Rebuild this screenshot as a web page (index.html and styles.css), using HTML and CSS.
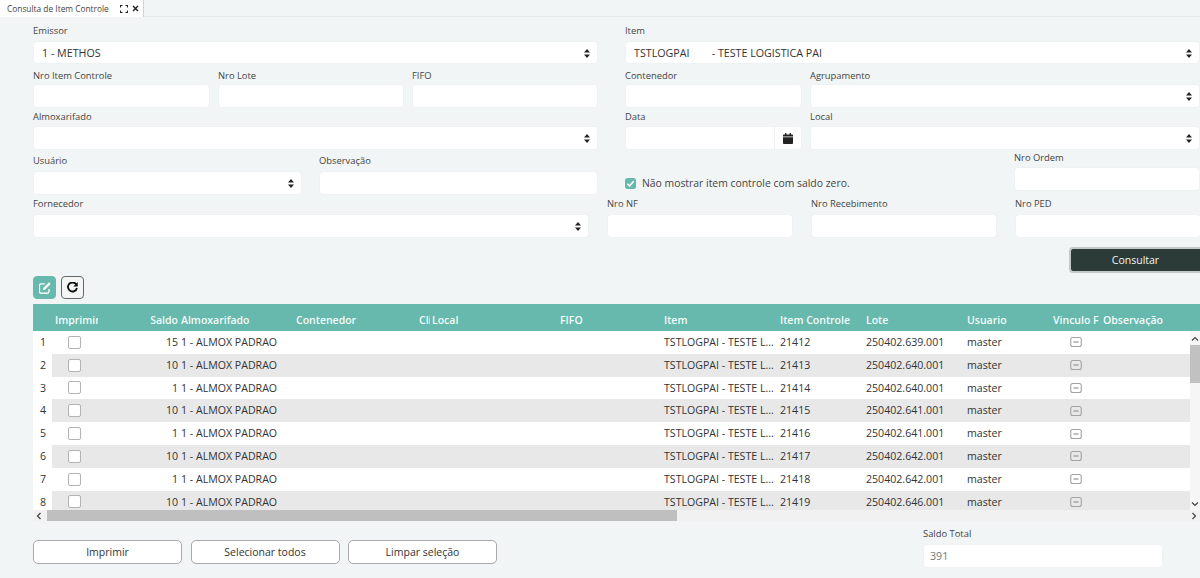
FILE: index.html
```html
<!DOCTYPE html>
<html lang="pt-BR">
<head>
<meta charset="utf-8">
<title>Consulta de Item Controle</title>
<link rel="stylesheet" href="styles.css">
</head>
<body>
<svg class="defs" width="0" height="0" aria-hidden="true">
  <symbol id="updown" viewBox="0 0 6 9"><path d="M3 0 6 3.6H0zM3 9 0 5.4H6z" fill="#222"/></symbol>
  <symbol id="minus" viewBox="0 0 12 12"><rect x=".75" y="1.5" width="10.5" height="9" rx="2" fill="none" stroke="#a3a3a3" stroke-width="1.1"/><path d="M3.5 6h5" stroke="#8a8a8a" stroke-width="1.1"/></symbol>
</svg>
<header class="tabbar">
  <div class="tab">
    <span class="tab-title">Consulta de Item Controle</span>
    <svg class="tab-icon" viewBox="0 0 10 10"><path d="M.7 3.2V.7h2.5M6.8.7h2.5v2.5M9.3 6.8v2.5H6.8M3.2 9.3H.7V6.8" fill="none" stroke="#222" stroke-width="1.3"/></svg>
    <svg class="tab-icon close" viewBox="0 0 10 10"><path d="M1.5 1.5l7 7M8.5 1.5l-7 7" fill="none" stroke="#222" stroke-width="2"/></svg>
  </div>
</header>
<main class="page">
  <section class="form">
    <div class="row r1">
      <div class="field w-565"><label>Emissor</label><div class="input select"><span>1 - METHOS</span><svg class="arrow"><use href="#updown"/></svg></div></div>
      <div class="field w-575 ml-27"><label>Item</label><div class="input select"><span class="pre">TSTLOGPAI        - TESTE LOGISTICA PAI</span><svg class="arrow"><use href="#updown"/></svg></div></div>
    </div>
    <div class="row r2">
      <div class="field w-177"><label>Nro Item Controle</label><div class="input"></div></div>
      <div class="field w-186 ml-8"><label>Nro Lote</label><div class="input"></div></div>
      <div class="field w-186 ml-8"><label>FIFO</label><div class="input"></div></div>
      <div class="field w-177 ml-27"><label>Contenedor</label><div class="input"></div></div>
      <div class="field w-390 ml-8"><label>Agrupamento</label><div class="input select"><svg class="arrow"><use href="#updown"/></svg></div></div>
    </div>
    <div class="row r3">
      <div class="field w-565"><label>Almoxarifado</label><div class="input select"><svg class="arrow"><use href="#updown"/></svg></div></div>
      <div class="field w-177 ml-27"><label>Data</label>
        <div class="input date"><div class="date-btn">
          <svg class="cal" viewBox="0 0 10 11"><path d="M2 0h1.4v1.4h3.2V0H8v1.4h1.2c.4 0 .8.4.8.8V3.6H0V2.2c0-.4.4-.8.8-.8H2zM0 4.3h10v5.9c0 .4-.4.8-.8.8H.8c-.4 0-.8-.4-.8-.8z" fill="#222"/></svg>
        </div></div>
      </div>
      <div class="field w-390 ml-8"><label>Local</label><div class="input select"><svg class="arrow"><use href="#updown"/></svg></div></div>
    </div>
    <div class="row r4">
      <div class="field w-269"><label>Usuário</label><div class="input select"><svg class="arrow"><use href="#updown"/></svg></div></div>
      <div class="field w-279 ml-17"><label>Observação</label><div class="input"></div></div>
      <div class="check">
        <span class="box"><svg viewBox="0 0 10 10"><path d="M2.2 5.2 4.2 7.2 7.9 3" fill="none" stroke="#fff" stroke-width="1.5"/></svg></span>
        <span>Não mostrar item controle com saldo zero.</span>
      </div>
      <div class="field w-186 ordem"><label>Nro Ordem</label><div class="input"></div></div>
    </div>
    <div class="row r5">
      <div class="field w-556"><label>Fornecedor</label><div class="input select"><svg class="arrow"><use href="#updown"/></svg></div></div>
      <div class="field w-186 ml-18"><label>Nro NF</label><div class="input"></div></div>
      <div class="field w-186 ml-18"><label>Nro Recebimento</label><div class="input"></div></div>
      <div class="field w-186 ml-18"><label>Nro PED</label><div class="input"></div></div>
    </div>
    <div class="actions"><button class="btn-dark">Consultar</button></div>
  </section>

  <div class="toolbar">
    <button class="tool teal"><svg viewBox="1 1 10 10"><path d="M9.3 6.8v2.2c0 .8-.6 1.4-1.4 1.4H2.8c-.8 0-1.4-.6-1.4-1.4V3.9c0-.8.6-1.4 1.4-1.4h3" fill="none" stroke="#fff" stroke-width="1.1"/><path d="M4.6 6 9.3 1.3l1.4 1.4L6 7.4l-1.7.3z" fill="#fff"/></svg></button>
    <button class="tool"><svg viewBox="1 1 10 10"><path d="M9.5 3.4A4.1 4.1 0 1 0 10 6.4" fill="none" stroke="#111" stroke-width="1.7"/><path d="M10.8 1v4H6.8z" fill="#111"/></svg></button>
  </div>

  <section class="grid">
    <div class="grid-head">
      <span class="c-n"></span><span class="c-imp cell">Imprimir</span><span class="c-saldo cell right">Saldo</span><span class="c-alm cell">Almoxarifado</span><span class="c-cont cell">Contenedor</span><span class="c-cli cell">Cliente</span><span class="c-local cell">Local</span><span class="c-fifo cell">FIFO</span><span class="c-item cell">Item</span><span class="c-ctrl cell">Item Controle</span><span class="c-lote cell">Lote</span><span class="c-user cell">Usuario</span><span class="c-vinc cell">Vinculo Fornecedor</span><span class="c-obs cell">Observação</span>
    </div>
    <div class="grid-body">
      <div class="grid-row"><span class="c-n cell">1</span><span class="c-imp"><i class="cb"></i></span><span class="c-saldo cell right">15</span><span class="c-alm cell">1 - ALMOX PADRAO</span><span class="c-cont"></span><span class="c-cli"></span><span class="c-local"></span><span class="c-fifo"></span><span class="c-item cell">TSTLOGPAI - TESTE L...</span><span class="c-ctrl cell">21412</span><span class="c-lote cell">250402.639.001</span><span class="c-user cell">master</span><span class="c-vinc"><svg class="mini"><use href="#minus"/></svg></span><span class="c-obs"></span></div>
      <div class="grid-row"><span class="c-n cell">2</span><span class="c-imp"><i class="cb"></i></span><span class="c-saldo cell right">10</span><span class="c-alm cell">1 - ALMOX PADRAO</span><span class="c-cont"></span><span class="c-cli"></span><span class="c-local"></span><span class="c-fifo"></span><span class="c-item cell">TSTLOGPAI - TESTE L...</span><span class="c-ctrl cell">21413</span><span class="c-lote cell">250402.640.001</span><span class="c-user cell">master</span><span class="c-vinc"><svg class="mini"><use href="#minus"/></svg></span><span class="c-obs"></span></div>
      <div class="grid-row"><span class="c-n cell">3</span><span class="c-imp"><i class="cb"></i></span><span class="c-saldo cell right">1</span><span class="c-alm cell">1 - ALMOX PADRAO</span><span class="c-cont"></span><span class="c-cli"></span><span class="c-local"></span><span class="c-fifo"></span><span class="c-item cell">TSTLOGPAI - TESTE L...</span><span class="c-ctrl cell">21414</span><span class="c-lote cell">250402.640.001</span><span class="c-user cell">master</span><span class="c-vinc"><svg class="mini"><use href="#minus"/></svg></span><span class="c-obs"></span></div>
      <div class="grid-row"><span class="c-n cell">4</span><span class="c-imp"><i class="cb"></i></span><span class="c-saldo cell right">10</span><span class="c-alm cell">1 - ALMOX PADRAO</span><span class="c-cont"></span><span class="c-cli"></span><span class="c-local"></span><span class="c-fifo"></span><span class="c-item cell">TSTLOGPAI - TESTE L...</span><span class="c-ctrl cell">21415</span><span class="c-lote cell">250402.641.001</span><span class="c-user cell">master</span><span class="c-vinc"><svg class="mini"><use href="#minus"/></svg></span><span class="c-obs"></span></div>
      <div class="grid-row"><span class="c-n cell">5</span><span class="c-imp"><i class="cb"></i></span><span class="c-saldo cell right">1</span><span class="c-alm cell">1 - ALMOX PADRAO</span><span class="c-cont"></span><span class="c-cli"></span><span class="c-local"></span><span class="c-fifo"></span><span class="c-item cell">TSTLOGPAI - TESTE L...</span><span class="c-ctrl cell">21416</span><span class="c-lote cell">250402.641.001</span><span class="c-user cell">master</span><span class="c-vinc"><svg class="mini"><use href="#minus"/></svg></span><span class="c-obs"></span></div>
      <div class="grid-row"><span class="c-n cell">6</span><span class="c-imp"><i class="cb"></i></span><span class="c-saldo cell right">10</span><span class="c-alm cell">1 - ALMOX PADRAO</span><span class="c-cont"></span><span class="c-cli"></span><span class="c-local"></span><span class="c-fifo"></span><span class="c-item cell">TSTLOGPAI - TESTE L...</span><span class="c-ctrl cell">21417</span><span class="c-lote cell">250402.642.001</span><span class="c-user cell">master</span><span class="c-vinc"><svg class="mini"><use href="#minus"/></svg></span><span class="c-obs"></span></div>
      <div class="grid-row"><span class="c-n cell">7</span><span class="c-imp"><i class="cb"></i></span><span class="c-saldo cell right">1</span><span class="c-alm cell">1 - ALMOX PADRAO</span><span class="c-cont"></span><span class="c-cli"></span><span class="c-local"></span><span class="c-fifo"></span><span class="c-item cell">TSTLOGPAI - TESTE L...</span><span class="c-ctrl cell">21418</span><span class="c-lote cell">250402.642.001</span><span class="c-user cell">master</span><span class="c-vinc"><svg class="mini"><use href="#minus"/></svg></span><span class="c-obs"></span></div>
      <div class="grid-row"><span class="c-n cell">8</span><span class="c-imp"><i class="cb"></i></span><span class="c-saldo cell right">10</span><span class="c-alm cell">1 - ALMOX PADRAO</span><span class="c-cont"></span><span class="c-cli"></span><span class="c-local"></span><span class="c-fifo"></span><span class="c-item cell">TSTLOGPAI - TESTE L...</span><span class="c-ctrl cell">21419</span><span class="c-lote cell">250402.646.001</span><span class="c-user cell">master</span><span class="c-vinc"><svg class="mini"><use href="#minus"/></svg></span><span class="c-obs"></span></div>
      <div class="vscroll">
        <svg class="sb-arrow" viewBox="0 0 8 6"><path d="M1 4.5 4 1.5 7 4.5" fill="none" stroke="#444" stroke-width="1.2"/></svg>
        <div class="vthumb"></div>
        <svg class="sb-arrow end" viewBox="0 0 8 6"><path d="M1 1.5 4 4.5 7 1.5" fill="none" stroke="#444" stroke-width="1.2"/></svg>
      </div>
    </div>
    <div class="hscroll">
      <svg class="sb-h" viewBox="0 0 6 8"><path d="M4.5 1 1.5 4 4.5 7" fill="none" stroke="#444" stroke-width="1.2"/></svg>
      <div class="hthumb"></div>
      <svg class="sb-h end" viewBox="0 0 6 8"><path d="M1.5 1 4.5 4 1.5 7" fill="none" stroke="#444" stroke-width="1.2"/></svg>
    </div>
  </section>

  <footer class="footer">
    <div class="footer-btns">
      <button class="btn">Imprimir</button>
      <button class="btn">Selecionar todos</button>
      <button class="btn">Limpar seleção</button>
    </div>
    <div class="field w-240"><label class="total-label">Saldo Total</label><div class="input total">391</div></div>
  </footer>
</main>
</body>
</html>
```
FILE: styles.css
```css
* { box-sizing: border-box; }
html, body { margin: 0; height: 578px; overflow: hidden; }
body { background: #f2f5f5; color: #3a3a3a; font: 10px/1.2 "Open Sans", "Noto Sans", sans-serif; width: 1200px; }
.defs { position: absolute; }

.tabbar { height: 17px; display: flex; border-bottom: 1px solid #e3e8e8; }
.tab { width: 144px; height: 17px; background: #fff; border-right: 1px solid #c9d8d6; display: flex; align-items: center; padding-left: 7px; }
.tab-title { font-size: 8.35px; width: 113px; color: #444; white-space: nowrap; }
.tab-icon { width: 8px; height: 8px; margin-right: 4px; flex: none; }
.tab-icon.close { width: 7px; height: 7px; margin-right: 0; }

.page { padding-left: 33px; }
.form { display: flex; flex-direction: column; padding-top: 7.5px; }
.row { display: flex; align-items: flex-start; }
.field { display: flex; flex-direction: column; flex: none; }
.field label { height: 11px; line-height: 11px; font-size: 9.4px; color: #444; white-space: nowrap; margin-bottom: 5.5px; }
.input { height: 24px; background: #fff; border-radius: 4px; border: 1px solid #eff2f2; font-size: 10.7px; color: #333; display: flex; align-items: center; padding-left: 8px; }
.select { padding-right: 7px; }
.pre { white-space: pre; }
.arrow { width: 6px; height: 9px; flex: none; margin-left: auto; }

.r1 { height: 45px; }
.r1 .input { height: 23px; padding-top: 1px; }
.r2 { height: 41px; }
.r2 .field label { margin-bottom: 3.5px; }
.r3 { height: 44px; }
.r3 .field label { margin-bottom: 4.5px; }
.r4 { height: 43px; }
.r5 { height: 49.5px; }

.w-177 { width: 177px; }
.w-186 { width: 186px; }
.w-240 { width: 240px; }
.w-269 { width: 269px; }
.w-279 { width: 279px; }
.w-390 { width: 390px; }
.w-556 { width: 556px; }
.w-565 { width: 565px; }
.w-575 { width: 575px; }
.ml-8 { margin-left: 8px; }
.ml-17 { margin-left: 17px; }
.ml-18 { margin-left: 18px; }
.ml-27 { margin-left: 27px; }

.date { padding: 0; justify-content: flex-end; }
.date-btn { width: 27px; height: 100%; display: flex; align-items: center; justify-content: center; border-left: 1px solid #edf0f0; }
.cal { width: 10px; height: 11px; }

.check { display: flex; align-items: center; gap: 6px; flex: none; font-size: 10.4px; color: #444; width: 389px; height: 13px; margin: 22px 0 0 27px; }
.box { width: 11px; height: 11px; border-radius: 2.5px; background: #66b9ac; display: flex; }
.box svg { width: 11px; height: 11px; }
.ordem { margin-top: -3px; }
.ordem label { margin-bottom: 4.5px; }

.actions { display: flex; justify-content: flex-end; height: 29px; }
.btn-dark { width: 131px; height: 26px; background: #2c3a38; color: #f2f5f5; border: 2px solid #c2cbc9; border-right: 0; border-radius: 4px 0 0 4px; font: 10.5px "Open Sans", sans-serif; padding: 0; }

.toolbar { display: flex; gap: 5px; height: 28px; }
.tool { width: 23px; height: 23px; padding: 0; border: 1px solid #666; border-radius: 4px; background: #f4f6f6; display: flex; align-items: center; justify-content: center; }
.tool svg { width: 11px; height: 11px; }
.teal { background: #66b9ac; border-color: #66b9ac; }
.teal svg { width: 12px; height: 12px; }

.grid { width: 1167px; }
.grid-head, .grid-row { display: grid; grid-template-columns: 19px 46px 81px 113px 123px 15px 126px 104px 116px 86px 101px 86px 50px 101px; align-items: center; }
.grid-head { height: 27px; background: #66b9ac; color: #f4fbfa; font-weight: 600; font-size: 10.5px; padding-top: 5px; }
.grid-body { height: 179px; overflow: hidden; position: relative; background: #fff; }
.grid-row { height: 22.8px; font-size: 10.6px; color: #333; }
.grid-row:nth-child(even) { background: linear-gradient(to right, #fff 19px, #e8e8e8 19px); }
.cell { display: block; white-space: nowrap; overflow: hidden; padding-left: 3px; }
.c-n { padding-left: 7px; }
.right { text-align: right; padding: 0 1px 0 0; }
.c-alm { padding-left: 2px; }
.c-cont, .c-cli, .c-item, .c-ctrl, .c-lote, .c-user, .c-fifo { padding-left: 4px; }
.c-local { padding-left: 2px; }
.c-imp { display: flex; }
.grid-head .c-imp { display: block; padding-left: 3px; }
.grid-head .c-vinc, .grid-head .c-obs { display: block; padding-left: 4px; }
.cb { width: 13px; height: 13px; border: 1px solid #b3b3b3; border-radius: 2px; background: #fff; margin-left: 16px; }
.c-vinc { display: flex; justify-content: center; }
.mini { width: 12px; height: 12px; margin-left: 4px; }
.vscroll { position: absolute; right: 0; top: 0; bottom: 0; width: 10px; background: #f6f6f6; display: flex; flex-direction: column; align-items: center; }
.sb-arrow { width: 8px; height: 6px; margin-top: 5px; flex: none; }
.vthumb { width: 10px; height: 38px; background: #c1c1c1; margin-top: 3px; }
.sb-arrow.end { margin-top: auto; margin-bottom: 3px; }
.hscroll { height: 11px; background: #f1f1f1; display: flex; align-items: center; }
.sb-h { width: 6px; height: 8px; margin-left: 3px; flex: none; }
.hthumb { width: 630px; height: 11px; background: #bfbfbf; margin-left: 5px; }
.sb-h.end { margin-left: auto; margin-right: 3px; }

.footer { display: flex; justify-content: space-between; padding-right: 37px; margin-top: 7px; }
.footer-btns { display: flex; gap: 8.5px; padding-top: 12px; }
.btn { width: 149px; height: 24px; background: #fff; border: 1px solid #a9a9a9; border-radius: 5px; color: #333; font: 10.5px "Open Sans", sans-serif; padding: 0; }
.field .total-label { margin-bottom: 5px; }
.total { color: #777; padding-left: 6px; }
```
